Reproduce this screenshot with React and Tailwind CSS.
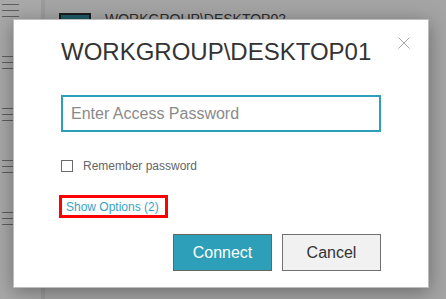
import React from 'react';

const font = { fontFamily: '"Liberation Sans", Arial, sans-serif' };

function Burger() {
    return (
        <div className="flex flex-col gap-[5px] w-[17px] ml-[2px]">
            <div className="h-px bg-[#5e5e5e]"></div>
            <div className="h-px bg-[#5e5e5e]"></div>
            <div className="h-px bg-[#5e5e5e]"></div>
        </div>
    );
}

export default function App() {
    return (
        <div className="relative w-[446px] h-[299px] overflow-hidden bg-[#a4a4a4]" style={font}>
            {/* Background page, dimmed */}
            <div className="flex h-full">
                <div className="w-[41px] bg-[#a8a8a8] pt-[4px] flex flex-col gap-[39px]">
                    <Burger />
                    <Burger />
                    <Burger />
                    <Burger />
                    <Burger />
                </div>
                <div className="w-[4px] bg-[#9b9b9b]"></div>
                <div className="flex-1 pl-[14px] pt-[13px]">
                    <div className="flex items-start gap-[14px]">
                        <div className="w-[32px] h-[24px] border-2 border-[#1c1c1c] bg-[#1f5a66]"></div>
                        <div className="text-[14px] leading-none text-[#2b2b2b] -mt-[1px]">WORKGROUP\DESKTOP02</div>
                    </div>
                </div>
            </div>

            {/* Dialog */}
            <div className="absolute left-[13px] top-[19px] w-[416px] h-[269px] bg-white border border-[#bdbdbd] shadow-[0_4px_18px_rgba(0,0,0,0.35)] pt-[20px] pl-[47px]">
                <button className="absolute right-[18px] top-[17px] w-[12px] h-[12px]">
                    <svg width="12" height="12" viewBox="0 0 12 12">
                        <path d="M0.5 0.5 L11.5 11.5 M11.5 0.5 L0.5 11.5" stroke="#a6a6a6" strokeWidth="1" fill="none" />
                    </svg>
                </button>

                <h2 className="text-[24px] leading-[24px] text-[#333]">WORKGROUP\DESKTOP01</h2>

                <input
                    type="password"
                    placeholder="Enter Access Password"
                    className="mt-[31px] block w-[320px] h-[37px] border-2 border-[#2e9fb8] pl-[8px] text-[16px] text-[#333] placeholder:text-[#8a8a8a] outline-none"
                    style={font}
                />

                <label className="mt-[26px] flex items-center h-[16px]">
                    <span className="w-[12px] h-[12px] border border-[#6a6a6a] bg-white"></span>
                    <span className="ml-[10px] text-[12px] text-[#666]">Remember password</span>
                </label>

                <div className="mt-[21px] -ml-[2px] w-[109px] h-[23px] border-[3px] border-[#ff0000] flex items-center pl-[4px]">
                    <span className="text-[12px] text-[#38a3c4] leading-none">Show Options (2)</span>
                </div>

                <div className="mt-[16px] w-[320px] flex justify-end gap-[10px]">
                    <button className="w-[99px] h-[37px] bg-[#2e9fb8] border border-[#656565] text-white text-[16px]" style={font}>Connect</button>
                    <button className="w-[99px] h-[37px] bg-[#f1f1f1] border border-[#707070] text-[#333] text-[16px]" style={font}>Cancel</button>
                </div>
            </div>
        </div>
    );
}
